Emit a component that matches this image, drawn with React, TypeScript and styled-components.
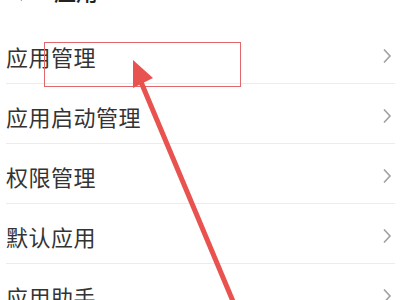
import React from 'react'
import styled, { createGlobalStyle } from 'styled-components'

const GlobalStyle = createGlobalStyle`
  html, body {
    margin: 0;
    padding: 0;
    background: #fff;
  }
  body {
    font-family: "Noto Sans CJK SC", "Noto Sans", sans-serif;
  }
`

const Page = styled.div`
  position: relative;
  width: 400px;
  height: 300px;
  overflow: hidden;
  background: #fff;
`

const Header = styled.div`
  height: 24px;
  display: flex;
  align-items: flex-start;
  gap: 22px;
  padding-left: 12px;
  overflow: hidden;
`

const BackIcon = styled.svg`
  width: 20px;
  height: 22px;
  margin-top: -18px;
  flex: none;
`

const HeaderTitle = styled.div`
  margin-top: -21px;
  font-size: 22px;
  line-height: 22px;
  font-weight: 500;
  color: #222;
`

const List = styled.div`
  display: flex;
  flex-direction: column;
`

const Row = styled.div`
  height: 60px;
  margin-left: 6px;
  margin-right: 5px;
  display: flex;
  align-items: center;
  justify-content: space-between;
  padding-top: 4px;
  box-sizing: border-box;
  border-bottom: 1px solid #ececec;
`

const Label = styled.span`
  font-size: 22px;
  line-height: 24px;
  color: #333;
  letter-spacing: 0.5px;
`

const Chevron = styled.svg`
  width: 10px;
  height: 16px;
  margin-right: 3px;
  flex: none;
`

const Highlight = styled.div`
  position: absolute;
  left: 44px;
  top: 42px;
  width: 195px;
  height: 43px;
  border: 1.5px solid #e0676b;
`

const Overlay = styled.svg`
  position: absolute;
  left: 0;
  top: 0;
  width: 400px;
  height: 300px;
  pointer-events: none;
`

const items = ['应用管理', '应用启动管理', '权限管理', '默认应用', '应用助手']

const App = () => {
  return (
    <Page>
      <GlobalStyle />
      <Header>
        <BackIcon viewBox="0 0 20 22">
          <path d="M18 11H3M10 4l-7 7 7 7" stroke="#333" strokeWidth="2" fill="none" />
        </BackIcon>
        <HeaderTitle>应用</HeaderTitle>
      </Header>
      <List>
        {items.map((label) => (
          <Row key={label}>
            <Label>{label}</Label>
            <Chevron viewBox="0 0 10 16">
              <polyline points="2,1.5 8,8 2,14.5" stroke="#a0a0a0" strokeWidth="1.6" fill="none" />
            </Chevron>
          </Row>
        ))}
      </List>
      <Highlight />
      <Overlay viewBox="0 0 400 300">
        <line x1="141" y1="82" x2="240" y2="318" stroke="#e8524f" strokeWidth="5" />
        <polygon points="133,60 153,78 133,88" fill="#e8524f" />
      </Overlay>
    </Page>
  )
}

export default App
